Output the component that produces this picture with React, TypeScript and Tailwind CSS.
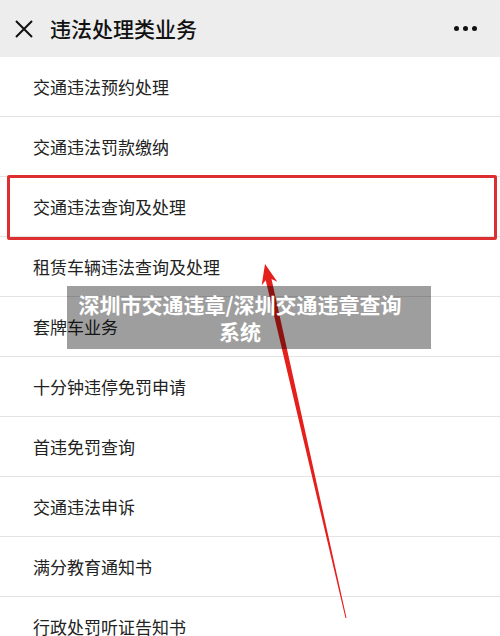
import React from "react";

const items = [
  "交通违法预约处理",
  "交通违法罚款缴纳",
  "交通违法查询及处理",
  "租赁车辆违法查询及处理",
  "套牌车业务",
  "十分钟违停免罚申请",
  "首违免罚查询",
  "交通违法申诉",
  "满分教育通知书",
  "行政处罚听证告知书",
];

export default function App() {
  return (
    <div
      className="relative w-[500px] h-[636px] overflow-hidden bg-white"
      style={{ fontFamily: '"Noto Sans CJK SC", "Noto Sans", sans-serif' }}
    >
      <div className="h-[57px] bg-[#ededed] flex items-center">
        <svg width="20" height="20" viewBox="0 0 20 20" className="ml-[14px]">
          <path d="M2 2 L18 18 M18 2 L2 18" stroke="#111" strokeWidth="2" fill="none" />
        </svg>
        <div className="ml-[16px] text-[21px] leading-none text-[#111] font-medium">违法处理类业务</div>
        <div className="ml-auto mr-[23px] flex gap-[4px]">
          <span className="w-[5px] h-[5px] rounded-full bg-[#111]" />
          <span className="w-[5px] h-[5px] rounded-full bg-[#111]" />
          <span className="w-[5px] h-[5px] rounded-full bg-[#111]" />
        </div>
      </div>
      <div className="flex flex-col">
        {items.map((t, i) => (
          <div
            key={i}
            className={
              i === 2
                ? "relative h-[60px] border-b border-[#e3e3e3] flex items-center pl-[33px] text-[17px] text-[#222]"
                : "h-[60px] border-b border-[#e3e3e3] flex items-center pl-[33px] text-[17px] text-[#222]"
            }
          >
            {t}
            {i === 2 && (
              <div className="absolute left-[7px] right-[3px] top-[-2px] bottom-[-4px] border-[3px] border-[#dd2f2f] rounded-[2px]" />
            )}
          </div>
        ))}
      </div>
      <svg className="absolute left-0 top-0" width="500" height="636" viewBox="0 0 500 636">
        <polygon
          points="265,264 277.3,281.7 271.5,279 346.5,618 345.5,618 265.7,280.3 261.7,285.3"
          fill="#e41f1c"
        />
      </svg>
      <div className="absolute left-[67px] top-[286px] w-[364px] h-[63px] bg-[rgba(0,0,0,0.38)] flex items-center justify-center pr-[18px]">
        <div className="text-white font-bold text-[21px] leading-[27px] text-center whitespace-nowrap">
          深圳市交通违章/深圳交通违章查询
          <br />
          系统
        </div>
      </div>
    </div>
  );
}
